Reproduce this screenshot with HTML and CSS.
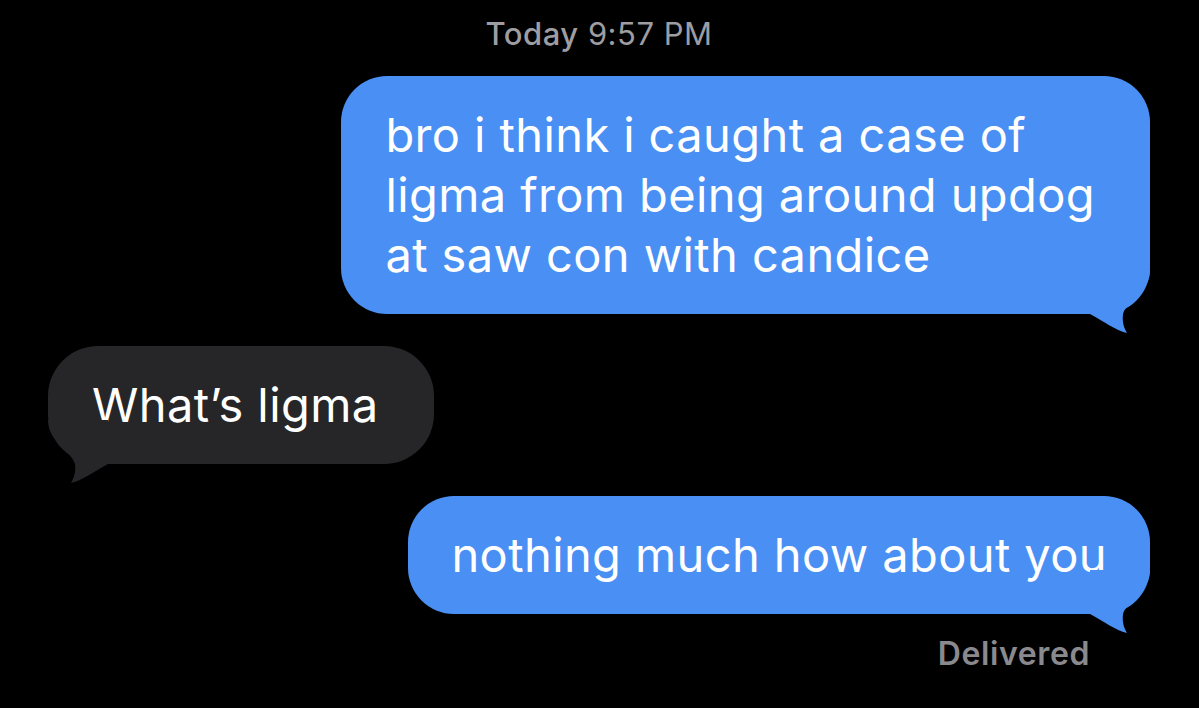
FILE: index.html
```html
<!DOCTYPE html>
<html>
<head>
<meta charset="utf-8">
<link rel="stylesheet" href="styles.css">
</head>
<body>
<div class="thread">
  <div class="stamp"><span class="day">Today</span> 9:57 PM</div>
  <div class="row out">
    <div class="bubble blue wide">bro i think i caught a case of<br>ligma from being around updog<br>at saw con with candice
      <svg class="tail tail-r" viewBox="0 0 65 65" width="65" height="65"><path d="M65 0 C65 22 42 30 38 44 C37 52 39 58 42 63 C30 60 20 52 5 44 L5 0 Z"/></svg>
    </div>
  </div>
  <div class="row in">
    <div class="bubble gray wide">What’s ligma
      <svg class="tail tail-l" viewBox="0 0 65 65" width="65" height="65"><path d="M0 0 C0 22 23 30 27 44 C28 52 26 58 23 63 C35 60 45 52 60 44 L60 0 Z"/></svg>
    </div>
  </div>
  <div class="row out">
    <div class="bubble blue">nothing much how about you
      <svg class="tail tail-r" viewBox="0 0 65 65" width="65" height="65"><path d="M65 0 C65 22 42 30 38 44 C37 52 39 58 42 63 C30 60 20 52 5 44 L5 0 Z"/></svg>
    </div>
  </div>
  <div class="row out">
    <div class="delivered">Delivered</div>
  </div>
</div>
</body>
</html>
```
FILE: styles.css
```css
html, body {
  margin: 0;
  padding: 0;
  background: #000;
}
body {
  width: 1199px;
  height: 708px;
  overflow: hidden;
  font-family: Inter, "Liberation Sans", sans-serif;
}
.thread {
  display: flex;
  flex-direction: column;
  padding: 14px 49px 0 48px;
}
.stamp {
  align-self: center;
  color: #9d9da2;
  font-size: 31px;
  letter-spacing: 0.5px;
  line-height: 40px;
}
.day {
  font-weight: 500;
}
.row {
  display: flex;
}
.row.out {
  justify-content: flex-end;
}
.row.in {
  justify-content: flex-start;
}
.bubble {
  position: relative;
  color: #fff;
  font-size: 47px;
  letter-spacing: 0.4px;
  line-height: 60px;
  padding: 29px 43px;
  border-radius: 46px;
  white-space: nowrap;
}
.bubble.wide {
  padding-left: 44px;
  padding-right: 55px;
}
.bubble.blue {
  background: #4a8ff3;
}
.bubble.gray {
  background: #262628;
  border-radius: 50px;
}
.thread > .row:nth-child(2) { margin-top: 22px; }
.thread > .row:nth-child(3) { margin-top: 32px; }
.thread > .row:nth-child(4) { margin-top: 32px; }
.tail {
  position: absolute;
  bottom: -21px;
}
.tail-r {
  right: 0;
  fill: #4a8ff3;
}
.tail-l {
  left: 0;
  fill: #262628;
}
.delivered {
  color: #8a8a8e;
  font-size: 32px;
  font-weight: 600;
  letter-spacing: 0.6px;
  line-height: 40px;
  margin-top: 20px;
  margin-right: 60px;
}
```
